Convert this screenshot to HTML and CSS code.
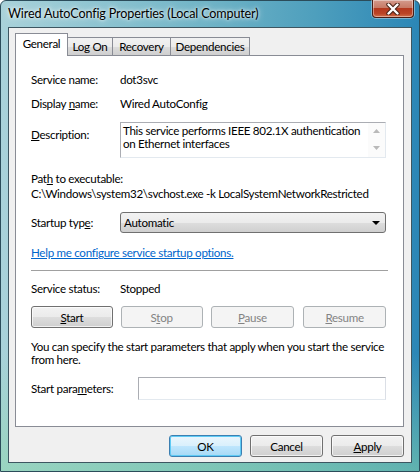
FILE: index.html
```html
<!DOCTYPE html>
<html lang="en">
<head>
    <meta charset="UTF-8">
    <title>Wired AutoConfig Properties (Local Computer)</title>
    <link rel="stylesheet" href="styles.css">
</head>
<body>
    <div class="window">
        <div class="titlebar">
            <span class="title">Wired AutoConfig Properties (Local Computer)</span>
            <div class="close-btn">
                <svg width="16" height="12" viewBox="0 0 16 12">
                    <path d="M3.5 1.5 L12.5 10.5 M12.5 1.5 L3.5 10.5" stroke="#4a2418" stroke-width="4.4" stroke-linecap="round"/>
                    <path d="M3.5 1.5 L12.5 10.5 M12.5 1.5 L3.5 10.5" stroke="#fff" stroke-width="2.4" stroke-linecap="round"/>
                </svg>
            </div>
        </div>

        <div class="client">
            <div class="tabs">
                <div class="tab selected">General</div>
                <div class="tab tab-logon">Log On</div>
                <div class="tab tab-recovery">Recovery</div>
                <div class="tab tab-deps">Dependencies</div>
            </div>

            <div class="panel">
                <div class="row">
                    <span class="label">Service name:</span>
                    <span>dot3svc</span>
                </div>
                <div class="row row-display">
                    <span class="label">Display <u>n</u>ame:</span>
                    <span>Wired AutoConfig</span>
                </div>
                <div class="row row-desc">
                    <span class="label desc-label"><u>D</u>escription:</span>
                    <div class="desc-box">
                        <div class="desc-text">This service performs IEEE 802.1X authentication on Ethernet interfaces</div>
                        <div class="scroll">
                            <svg width="7" height="4" viewBox="0 0 7 4"><path d="M0 4 L3.5 0 L7 4 Z" fill="#b9b9b9"/></svg>
                            <svg width="7" height="4" viewBox="0 0 7 4"><path d="M0 0 L3.5 4 L7 0 Z" fill="#b9b9b9"/></svg>
                        </div>
                    </div>
                </div>
                <div class="path-label">Pat<u>h</u> to executable:</div>
                <div class="path-value">C:\Windows\system32\svchost.exe -k LocalSystemNetworkRestricted</div>
                <div class="row row-startup">
                    <span class="label">Startup typ<u>e</u>:</span>
                    <div class="combo">
                        <span>Automatic</span>
                        <svg width="8" height="4" viewBox="0 0 8 4"><path d="M0 0 L8 0 L4 4 Z" fill="#000"/></svg>
                    </div>
                </div>
                <a class="help-link" href="#">Help me configure service startup options.</a>
                <div class="separator"></div>
                <div class="row row-status">
                    <span class="label">Service status:</span>
                    <span>Stopped</span>
                </div>
                <div class="service-buttons">
                    <button class="btn btn-start"><u>S</u>tart</button>
                    <button class="btn btn-stop" disabled>S<u>t</u>op</button>
                    <button class="btn btn-pause" disabled><u>P</u>ause</button>
                    <button class="btn btn-resume" disabled><u>R</u>esume</button>
                </div>
                <p class="note">You can specify the start parameters that apply when you start the service from here.</p>
                <div class="row row-params">
                    <span class="label params-label">Start para<u>m</u>eters:</span>
                    <div class="params-input"></div>
                </div>
            </div>

            <div class="footer">
                <button class="btn dlg default">OK</button>
                <button class="btn dlg">Cancel</button>
                <button class="btn dlg"><u>A</u>pply</button>
            </div>
        </div>
    </div>
</body>
</html>
```

FILE: styles.css
```css
body {
    margin: 0;
    font-family: Lato, "Liberation Sans", Arial, sans-serif;
    font-size: 11.6px;
    letter-spacing: -0.3px;
    color: #000;
    background: #fff;
}
.window {
    width: 420px;
    height: 472px;
    box-sizing: border-box;
    padding: 0 7px 8px 7px;
    display: flex;
    flex-direction: column;
    border: 1px solid #2b4c5a;
    border-radius: 6px 6px 0 0;
    background:
        linear-gradient(180deg, rgba(0,0,0,0) 0%, rgba(0,0,0,0) 75%, rgba(140,215,170,0.55) 100%),
        linear-gradient(90deg, #a9d2da 0%, #8cc3d0 25%, #6fb3c6 50%, #4e9fbd 75%, #2b86b6 100%);
}
.titlebar {
    height: 26px;
    display: flex;
    align-items: flex-start;
    justify-content: space-between;
}
.title {
    margin-top: 5px;
    font-size: 12.6px;
    letter-spacing: -0.15px;
    color: #000;
    text-shadow: 0 0 6px rgba(255,255,255,0.9), 0 0 3px rgba(255,255,255,0.9);
}
.close-btn {
    width: 42px;
    height: 18px;
    margin-top: -1px;
    margin-right: -2px;
    box-sizing: border-box;
    border: 1px solid #4a1e16;
    border-top: none;
    border-radius: 0 0 4px 4px;
    display: flex;
    align-items: center;
    justify-content: center;
    background: linear-gradient(180deg, #d49a8c 0%, #c77a66 45%, #b4381e 50%, #bb4426 80%, #d0704c 100%);
    box-shadow: inset 0 0 0 1px rgba(255,255,255,0.4), 0 0 0 1px rgba(255,255,255,0.35);
}
.client {
    flex: 1;
    border: 1px solid #3d5661;
    background: #f0f0f0;
    padding: 5px 7px 0 6px;
    display: flex;
    flex-direction: column;
}
.tabs {
    display: flex;
    align-items: flex-end;
    height: 22px;
}
.tab {
    height: 18px;
    box-sizing: border-box;
    border: 1px solid #898c95;
    border-bottom: none;
    border-left: none;
    background: linear-gradient(180deg, #f2f2f2 0%, #ebebeb 50%, #dddddd 51%, #cfcfcf 100%);
    line-height: 17px;
    text-align: center;
}
.tab.selected {
    width: 53px;
    height: 23px;
    margin-bottom: -1px;
    border-left: 1px solid #898c95;
    background: #fff;
    position: relative;
    line-height: 20px;
}
.tab-logon { width: 45px; }
.tab-recovery { width: 58px; }
.tab-deps { width: 79px; }
.panel {
    height: 372px;
    box-sizing: border-box;
    border: 1px solid #898c95;
    background: #fff;
    padding: 16px 17px 0 15px;
}
.row {
    display: flex;
    align-items: flex-start;
    line-height: 15px;
}
.label {
    width: 89px;
    flex-shrink: 0;
}
.row-display {
    margin-top: 9px;
}
.row-desc {
    margin-top: 11px;
}
.desc-label {
    padding-top: 5px;
}
.desc-box {
    width: 267px;
    height: 36px;
    box-sizing: border-box;
    border: 1px solid #abadb3;
    border-right-color: #e3e9ef;
    border-bottom-color: #e3e9ef;
    display: flex;
}
.desc-text {
    flex: 1;
    padding: 1px 0 0 2px;
    line-height: 13px;
}
.scroll {
    width: 17px;
    display: flex;
    flex-direction: column;
    align-items: center;
    justify-content: space-between;
    padding: 6px 0 7px;
    box-sizing: border-box;
    background: #fbfbfb;
}
.path-label {
    margin-top: 13px;
    line-height: 15px;
}
.path-value {
    line-height: 15px;
    white-space: nowrap;
}
.row-startup {
    margin-top: 11px;
    align-items: center;
}
.combo {
    width: 268px;
    height: 21px;
    box-sizing: border-box;
    border: 1px solid #707070;
    border-radius: 3px;
    background: linear-gradient(180deg, #f2f2f2 0%, #ebebeb 50%, #dddddd 51%, #cfcfcf 100%);
    display: flex;
    align-items: center;
    justify-content: space-between;
    padding: 0 5px 0 3px;
}
.help-link {
    display: block;
    margin-top: 12px;
    line-height: 15px;
    color: #0066cc;
    text-decoration: underline;
}
.separator {
    margin-top: 10px;
    width: 357px;
    height: 1px;
    background: #a0a0a0;
}
.row-status {
    margin-top: 10px;
}
.service-buttons {
    display: flex;
    gap: 8px;
    margin-top: 10px;
}
.btn {
    height: 22px;
    box-sizing: border-box;
    border: 1px solid #707070;
    border-radius: 3px;
    background: linear-gradient(180deg, #f2f2f2 0%, #ebebeb 50%, #dddddd 51%, #cfcfcf 100%);
    font-family: inherit;
    font-size: 11.6px;
    letter-spacing: -0.3px;
    color: #000;
    padding: 0;
    box-shadow: inset 0 0 0 1px rgba(255,255,255,0.7);
}
.btn:disabled {
    border-color: #adb2b5;
    background: #f4f4f4;
    color: #838383;
    box-shadow: none;
}
.btn-start { width: 82px; }
.btn-stop { width: 82px; }
.btn-pause { width: 84px; }
.btn-resume { width: 83px; margin-left: 1px; }
.note {
    margin: 12px 0 0;
    line-height: 13px;
    width: 370px;
}
.row-params {
    margin-top: 11px;
    align-items: center;
}
.params-label {
    width: 107px;
}
.params-input {
    width: 250px;
    height: 23px;
    box-sizing: border-box;
    border: 1px solid #abadb3;
    border-right-color: #dbdfe6;
    border-bottom-color: #e3e9ef;
    background: #fff;
}
.footer {
    display: flex;
    justify-content: flex-end;
    gap: 8px;
    margin-top: 8px;
}
.btn.dlg {
    width: 73px;
}
.btn.default {
    border-color: #3c7fb1;
    background: linear-gradient(180deg, #eaf6fd 0%, #d9f0fc 50%, #bee6fd 51%, #a7d9f5 100%);
    box-shadow: inset 0 0 0 1px #5ecbf5;
}
```
